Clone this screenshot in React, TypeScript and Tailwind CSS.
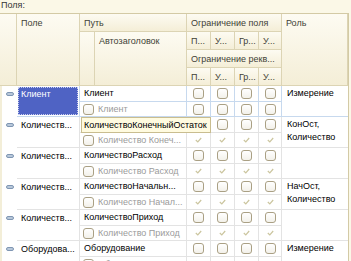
import React from "react";

interface Row {
  field: string;
  path: string;
  auto: string;
  role: string[];
  subChecks: boolean;
  selected?: boolean;
  editing?: boolean;
}

const rows: Row[] = [
  { field: "Клиент", path: "Клиент", auto: "Клиент", role: ["Измерение"], subChecks: false, selected: true },
  {
    field: "Количеств...",
    path: "КоличествоКонечныйОстаток",
    auto: "Количество Конеч...",
    role: ["КонОст,", "Количество"],
    subChecks: true,
    editing: true,
  },
  { field: "Количеств...", path: "КоличествоРасход", auto: "Количество Расход", role: [], subChecks: true },
  {
    field: "Количеств...",
    path: "КоличествоНачальн...",
    auto: "Количество Начал...",
    role: ["НачОст,", "Количество"],
    subChecks: true,
  },
  { field: "Количеств...", path: "КоличествоПриход", auto: "Количество Приход", role: [], subChecks: true },
  { field: "Оборудова...", path: "Оборудование", auto: "Оборудование", role: ["Измерение"], subChecks: true },
];

const cols = "grid grid-cols-[17px_63px_15px_92px_24px_24px_24px_23px_66px]";

const H = ({ className = "", children }: { className?: string; children?: React.ReactNode }) => (
  <div
    className={`bg-gradient-to-b from-[#fdfbf2] to-[#f4eed7] border-r border-b border-[#dcd4b4] pl-[4px] pt-[3px] leading-[12px] text-[#3f3f36] whitespace-nowrap overflow-hidden ${className}`}
  >
    {children}
  </div>
);

const Box = () => (
  <div className="w-[11px] h-[11px] rounded-[3px] border border-[#aaa084] bg-gradient-to-b from-white to-[#f3f1ea]" />
);

const Tick = () => (
  <svg width="7" height="6" viewBox="0 0 7 6">
    <polyline points="0.8,3 2.8,4.9 6.2,1" fill="none" stroke="#cbc59e" strokeWidth="1.2" />
  </svg>
);

const Group = ({ row }: { row: Row }) => {
  const line = row.selected ? "border-[#c7d9ee]" : "border-[#e3e3e3]";
  return (
    <div className={`${cols} grid-rows-[16px_15px] relative`}>
      <div className="row-span-2 border-l-2 border-[#f3eed8] bg-white flex justify-center pt-[6px]">
        <div className="w-[8px] h-[4px] rounded-[2px] border border-[#7f96b3] bg-[#b8c8da]" />
      </div>
      <div className={`row-span-2 border-r border-b ${line} p-[1px]`}>
        {row.selected ? (
          <div className="h-full bg-[#4f63c4] outline outline-1 outline-dotted outline-[#c9d0f0] -outline-offset-1 text-white pl-[3px] leading-[14px]">
            {row.field}
          </div>
        ) : (
          <div className="pl-[3px] leading-[14px] whitespace-nowrap overflow-hidden">{row.field}</div>
        )}
      </div>
      <div className={`col-span-2 border-r border-b ${line} pl-[4px] leading-[15px] whitespace-nowrap overflow-hidden`}>
        {row.editing ? null : row.path}
      </div>
      {[0, 1, 2, 3].map((i) => (
        <div key={i} className={`border-r border-b ${line} flex items-center justify-center`}>
          <Box />
        </div>
      ))}
      <div className={`row-span-2 border-b ${line} pl-[5px] pt-[1px] leading-[13px]`}>
        {row.role.map((r) => (
          <div key={r}>{r}</div>
        ))}
      </div>
      <div className={`border-b ${line} flex items-center justify-end pr-[1px]`}>
        <Box />
      </div>
      <div className={`border-r border-b ${line} pl-[3px] leading-[14px] text-[#9b9b9b] whitespace-nowrap overflow-hidden`}>
        {row.auto}
      </div>
      {[0, 1, 2, 3].map((i) => (
        <div key={i} className={`border-r border-b ${line} flex items-center justify-center`}>
          {row.subChecks ? <Tick /> : <Box />}
        </div>
      ))}
      {row.editing && (
        <div className="absolute left-[81px] top-0 min-w-[130px] h-[16px] bg-[#fffbe0] border border-[#c9bd8f] pl-[2px] pr-[2px] leading-[14px] whitespace-nowrap">
          {row.path}
        </div>
      )}
    </div>
  );
};

export default function App() {
  return (
    <div className="w-[351px] h-[261px] overflow-hidden bg-[#fbf8e7] text-[9px] text-black font-['Liberation_Sans',Arial,sans-serif]">
      <div className="h-[13px] pl-[1px] leading-[10px] text-[#333]">Поля:</div>
      <div className="flex">
        <div className="w-[349px] border-r border-[#d3caa5] bg-white">
          <div className={`${cols} grid-rows-[18px_18px_18px_18px] border-t border-[#d3caa5]`}>
            <H className="row-span-4 col-start-1 row-start-1" />
            <H className="row-span-4 col-start-2 row-start-1">Поле</H>
            <H className="col-span-2 col-start-3 row-start-1">Путь</H>
            <H className="col-span-4 col-start-5 row-start-1">Ограничение поля</H>
            <H className="row-span-4 col-start-9 row-start-1">Роль</H>
            <H className="row-span-3 col-start-3 row-start-2" />
            <H className="row-span-3 col-start-4 row-start-2">Автозаголовок</H>
            <H className="col-start-5 row-start-2 pl-[3px]">П...</H>
            <H className="col-start-6 row-start-2 pl-[3px]">У...</H>
            <H className="col-start-7 row-start-2 pl-[3px]">Гр...</H>
            <H className="col-start-8 row-start-2 pl-[3px]">У...</H>
            <H className="col-span-4 col-start-5 row-start-3">Ограничение рекв...</H>
            <H className="col-start-5 row-start-4 pl-[3px]">П...</H>
            <H className="col-start-6 row-start-4 pl-[3px]">У...</H>
            <H className="col-start-7 row-start-4 pl-[3px]">Гр...</H>
            <H className="col-start-8 row-start-4 pl-[3px]">У...</H>
          </div>
          {rows.map((row, i) => (
            <Group key={i} row={row} />
          ))}
        </div>
        <div className="w-[2px]" />
      </div>
    </div>
  );
}
